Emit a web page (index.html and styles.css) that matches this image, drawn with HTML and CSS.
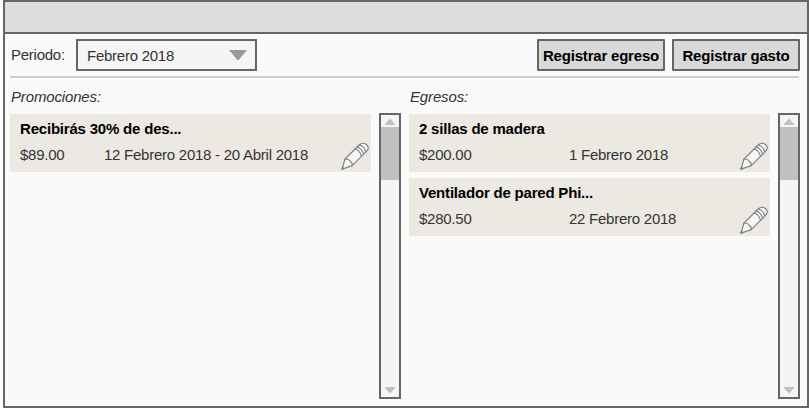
FILE: index.html
```html
<!DOCTYPE html>
<html lang="es">
<head>
<meta charset="utf-8">
<title>Egresos</title>
<link rel="stylesheet" href="styles.css">
</head>
<body>
<svg class="defs" width="0" height="0" aria-hidden="true">
  <symbol id="pencil" viewBox="0 0 28 28">
    <g stroke="#808080" stroke-width="1.2" stroke-linejoin="round" stroke-linecap="round">
      <path fill="#f7f7f7" d="M1 27.2 4 17 18.2 3Q21 .4 24.2 1.7 27.6 3.6 27.2 6.4 26.8 8 25 9.9L11.2 23.6Z"/>
      <path fill="none" d="M4 17Q8.4 17 9 19.2 11.4 20 11.2 23.6M14.2 7Q19 8.4 20.4 14.2M16.2 5Q21 6.4 22.5 12.2M18.4 3Q23.4 4.4 24.8 10"/>
      <path fill="#808080" d="M1 27.2 1.6 25.3 2.8 26.4Z"/>
    </g>
  </symbol>
</svg>
<div class="window">
  <header class="titlebar"></header>
  <main class="content">
    <div class="toolbar">
      <span class="label">Periodo:</span>
      <div class="select"><span>Febrero 2018</span><svg width="18" height="10"><path d="M0 0H18L9.7 10H8.3Z" fill="#999"/></svg></div>
      <button class="button first">Registrar egreso</button>
      <button class="button">Registrar gasto</button>
    </div>
    <div class="columns">
      <section class="column">
        <h2>Promociones:</h2>
        <div class="body">
          <div class="list">
            <article class="card promo">
              <h3>Recibirás 30% de des...</h3>
              <div class="row"><span class="price">$89.00</span><span>12 Febrero 2018 - 20 Abril 2018</span></div>
              <svg class="pencil"><use href="#pencil"/></svg>
            </article>
          </div>
          <div class="scroll"><svg class="up" viewBox="0 0 10 6"><path d="M0 6V5L4.5 0H5.5L10 5V6Z"/></svg><div class="thumb"></div><svg class="down" viewBox="0 0 10 6"><path d="M0 0V1L4.5 6H5.5L10 1V0Z"/></svg></div>
        </div>
      </section>
      <section class="column">
        <h2>Egresos:</h2>
        <div class="body">
          <div class="list">
            <article class="card">
              <h3>2 sillas de madera</h3>
              <div class="row"><span class="price">$200.00</span><span>1 Febrero 2018</span></div>
              <svg class="pencil"><use href="#pencil"/></svg>
            </article>
            <article class="card">
              <h3>Ventilador de pared Phi...</h3>
              <div class="row"><span class="price">$280.50</span><span>22 Febrero 2018</span></div>
              <svg class="pencil"><use href="#pencil"/></svg>
            </article>
          </div>
          <div class="scroll"><svg class="up" viewBox="0 0 10 6"><path d="M0 6V5L4.5 0H5.5L10 5V6Z"/></svg><div class="thumb"></div><svg class="down" viewBox="0 0 10 6"><path d="M0 0V1L4.5 6H5.5L10 1V0Z"/></svg></div>
        </div>
      </section>
    </div>
  </main>
</div>
</body>
</html>
```
FILE: styles.css
```css
* { box-sizing: border-box; }
body {
  margin: 0;
  background: #fff;
  color: #333;
  font: 15px/18px "Liberation Sans", Arial, sans-serif;
  letter-spacing: -0.25px;
  overflow: hidden;
}
.defs { position: absolute; }
.window {
  display: flex;
  flex-direction: column;
  height: 408px;
  margin-left: 3px;
  border: 2px solid #666;
  background: #fafafa;
}
.titlebar { height: 32px; flex: none; background: #ddd; border-bottom: 2px solid #666; }
.content { flex: 1; display: flex; flex-direction: column; padding: 5px 7px 7px 5px; }
.toolbar {
  display: flex;
  height: 39px;
  margin-right: 1px;
  border-bottom: 2px solid #ccc;
}
.label { width: 66px; padding: 7px 0 0 1px; white-space: nowrap; }
.select {
  display: flex;
  justify-content: space-between;
  width: 181px;
  height: 32px;
  padding: 6px 8px 0 9px;
  border: 2px solid #666;
  background: #f5f5f5;
}
.select svg { margin-top: 3px; }
.button {
  width: 128px;
  height: 32px;
  margin: 0 -1px 0 8px;
  padding: 2px 0 0;
  border: 2px solid #666;
  border-radius: 1px;
  background: #d9d9d9;
  color: #000;
  font: bold 15px/18px "Liberation Sans", Arial, sans-serif;
  letter-spacing: -0.2px;
  white-space: nowrap;
}
.button.first { margin-left: auto; }
.columns { flex: 1; display: flex; gap: 8px; }
.column { display: flex; flex-direction: column; width: 391px; }
h2 { margin: 10px 0 7px 1px; font-size: 15px; font-weight: normal; font-style: italic; letter-spacing: -0.15px; }
.body { flex: 1; display: flex; justify-content: space-between; }
.list { display: flex; flex-direction: column; gap: 6px; width: 361px; padding-top: 1px; }
.card { position: relative; height: 58px; padding: 6px 10px; background: #ece9e2; }
h3 { margin: 0 0 8px; font-size: 15px; line-height: 18px; letter-spacing: -0.2px; color: #000; }
.row { display: flex; white-space: nowrap; }
.price { width: 150px; }
.promo .price { width: 84px; }
.pencil { position: absolute; left: 331px; top: 28px; width: 28px; height: 28px; }
.scroll {
  display: flex;
  flex-direction: column;
  align-items: center;
  width: 22px;
  border: 2px solid #666;
  background: #f5f5f5;
}
.scroll svg { width: 10px; height: 6px; fill: #c0c0c0; }
.up { margin: 4px 0 2px; }
.thumb { width: 100%; height: 53px; background: #c0c0c0; }
.down { margin: auto 0 4px; }
```
